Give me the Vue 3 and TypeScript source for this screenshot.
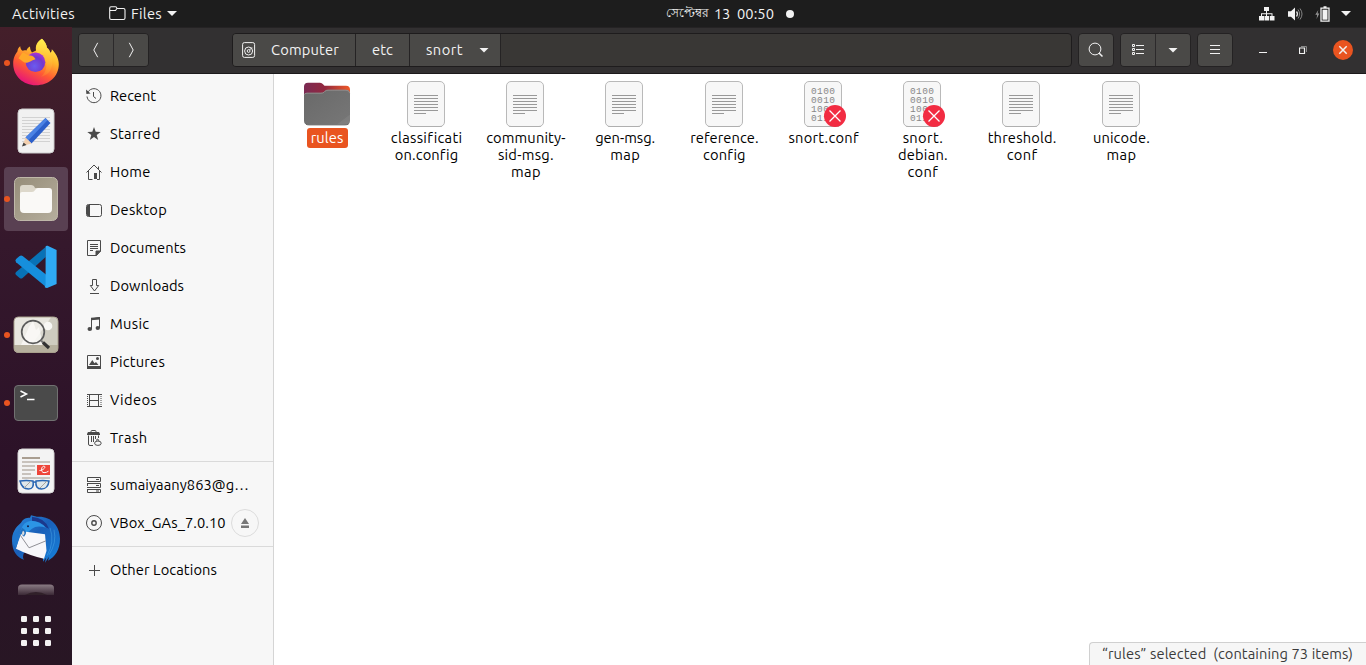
<script setup lang="ts">
interface Place { icon: string; label: string; width: number; eject?: boolean }
interface FileLine { text: string; width: number }
interface FileItem { kind: 'folder' | 'text' | 'binary'; lines: FileLine[] }

const fitText = (el: HTMLElement, binding: { value: number }) => {
  const count = [...(el.textContent ?? '')].length
  el.style.letterSpacing = '0px'
  const natural = el.getBoundingClientRect().width
  el.style.letterSpacing = `${(binding.value - natural) / count}px`
}
const vFit = { mounted: fitText }

const glyphs: Record<string, string> = {
  recent: '<path d="M1.400 5.200A7 7 0 1 1 1 8.500"/><path d="M7.500 4v4.500l2.500 2"/><path d="M0 1.500l.4 4.500 4.200-.6z" fill="#4a4a4a" stroke="none"/>',
  starred: '<path d="M8 1l1.700 4.800 5 .1-4 3.100 1.500 4.900L8 11l-4.200 2.900L5.300 9l-4-3.100 5-.1z" fill="#4a4a4a" stroke="none"/>',
  home: '<path d="M.5 8.500L8 1l7.500 7.500M2.500 7v8.500h4M13.500 7v8.500H11M12.500 2.500v3"/><path d="M8 9h3v6H8z" fill="#4a4a4a" stroke="none"/>',
  desktop: '<rect x=".5" y="2.500" width="15" height="12" rx="2"/><path d="M1 4q0-1 1-1h2v11H2q-1 0-1-1z" fill="#4a4a4a" stroke="none"/>',
  documents: '<path d="M1.500.5h13v10.500l-4 4.500h-9z"/><path d="M4 4.500h8M4 6.500h8M4 8.500h8M4 10.500h3"/><path d="M10 15.500V11h4.500z" fill="#4a4a4a"/>',
  downloads: '<path d="M6.500 1.500h4v6h2.200L8.500 13 4.300 7.500h2.200zM4 15.500h9"/>',
  music: '<path d="M5.500 13V3l8-1.500V12" /><path d="M5 1.800L14 1v2.400L5 4.200z" fill="#4a4a4a" stroke="none"/><ellipse cx="3.800" cy="13" rx="2.300" ry="1.900" fill="#4a4a4a" stroke="none"/><ellipse cx="11.800" cy="12" rx="2.200" ry="1.900" fill="#4a4a4a" stroke="none"/>',
  pictures: '<path d="M1.500 1.500h13v13h-13z"/><path d="M1 12h14v3H1zM3 11l3.300-5 2.200 3.200L10 8l2.500 3z" fill="#4a4a4a" stroke="none"/><circle cx="11.500" cy="4.500" r="1.500" fill="#4a4a4a" stroke="none"/>',
  videos: '<path d="M3.500 2v13M12.500 2v13M1 2.500h15M1 14.500h15M4 8.500h8"/><path d="M1.500 2v13M15 2v13" stroke-dasharray="1 1"/>',
  trash: '<path d="M5 2.500v-1q0-1 1-1h3q1 0 1 1v1"/><path d="M2 2h11l1 2v1H1V4z" fill="#4a4a4a" stroke="none"/><path d="M2.500 5.500v8.500q0 1.500 1.500 1.500h3M12.500 5.500V8M5.500 6v6M7.500 6v6M9.500 6v3"/><ellipse cx="11.900" cy="13.200" rx="3.300" ry="2.200"/><path d="M10.800 10.800q-.8-1.500 1-1.800l1 1.800"/>',
  server: '<path d="M1.500 4V.5h13v4H1M1.500 9V6.500M1 6.500h13.500v4H1M1 12.500h13.500v3h-13v-3"/><path d="M10 2.500h3M10 8.500h3M10 14h3"/>',
  disc: '<circle cx="8" cy="8" r="7.500"/><circle cx="8" cy="8" r="2.200" stroke-width="1.400"/>',
  plus: '<path d="M8.500 3v11M3 8.500h11"/>',
}

const groups: Place[][] = [
  [
    { icon: 'recent', label: 'Recent', width: 46 },
    { icon: 'starred', label: 'Starred', width: 50.5 },
    { icon: 'home', label: 'Home', width: 40.5 },
    { icon: 'desktop', label: 'Desktop', width: 57 },
    { icon: 'documents', label: 'Documents', width: 76 },
    { icon: 'downloads', label: 'Downloads', width: 74 },
    { icon: 'music', label: 'Music', width: 39.5 },
    { icon: 'pictures', label: 'Pictures', width: 55 },
    { icon: 'videos', label: 'Videos', width: 47 },
    { icon: 'trash', label: 'Trash', width: 37.5 },
  ],
  [
    { icon: 'server', label: 'sumaiyaany863@g…', width: 139 },
    { icon: 'disc', label: 'VBox_GAs_7.0.10', width: 115.5, eject: true },
  ],
  [{ icon: 'plus', label: 'Other Locations', width: 107 }],
]

const files: FileItem[] = [
  { kind: 'folder', lines: [{ text: 'rules', width: 33 }] },
  { kind: 'text', lines: [{ text: 'classificati', width: 71 }, { text: 'on.config', width: 63 }] },
  { kind: 'text', lines: [{ text: 'community-', width: 79.5 }, { text: 'sid-msg.', width: 56 }, { text: 'map', width: 30 }] },
  { kind: 'text', lines: [{ text: 'gen-msg.', width: 60 }, { text: 'map', width: 30 }] },
  { kind: 'text', lines: [{ text: 'reference.', width: 68.5 }, { text: 'config', width: 42 }] },
  { kind: 'binary', lines: [{ text: 'snort.conf', width: 70.5 }] },
  { kind: 'binary', lines: [{ text: 'snort.', width: 40.5 }, { text: 'debian.', width: 50 }, { text: 'conf', width: 31 }] },
  { kind: 'text', lines: [{ text: 'threshold.', width: 69 }, { text: 'conf', width: 31 }] },
  { kind: 'text', lines: [{ text: 'unicode.', width: 57 }, { text: 'map', width: 30 }] },
]
const bits = ['0100', '0010', '1001', '0110']
const dotCells = [0, 12, 24]
</script>

<template>
  <div class="screen">
    <header class="topbar">
      <span v-fit="63" class="t activities">Activities</span>
      <div class="appmenu">
        <svg width="17" height="15" viewBox="0 0 17 15" fill="none" stroke="#f2f2f2" stroke-width="1.100">
          <path d="M.7 12V2.200Q.7.8 2 .8h4.500Q7.700.8 7.900 2.500H14.500q1.500 0 1.500 1.500v8q0 1.500-1.500 1.500H2.200Q.7 13.500.7 12zM1 4.500h5.500l1.400-2" />
        </svg>
        <span v-fit="31" class="t">Files</span>
        <i class="caret"></i>
      </div>
      <div class="clock">
        <span class="t bn">সেপ্টেম্বর</span>
        <span v-fit="16" class="t">13</span>
        <span v-fit="37" class="t">00:50</span>
        <i class="dot"></i>
      </div>
      <div class="tray">
        <svg width="16" height="14" viewBox="0 0 16 14" fill="#f2f2f2">
          <path d="M5 0h5v4H5zM0 9h5v4.500H0zM5.500 9h4.500v4.500H5.500zM10.800 9h4.700v4.500h-4.700zM7 4h1v5H7zM2 6.200h11.500V9h-1V7.200H3V9H2z" />
        </svg>
        <svg width="15" height="14" viewBox="0 0 15 14" fill="none">
          <path d="M0 4.300h3L7 .5v13l-4-3.800H0z" fill="#f2f2f2" />
          <path d="M8.500 4.500q2 2.500 0 5" stroke="#ddd" stroke-width="1.300" />
          <path d="M10 2.500q3.200 4.500 0 9M12 1.500q4 5.500 0 11" stroke="#858585" />
        </svg>
        <svg width="15" height="16" viewBox="0 0 15 16" fill="none">
          <path d="M3.300 4L.3 8.800h1.900L1.500 13 4.300 7.600H2.500z" fill="#999" />
          <path d="M6 2.200h8v13H6zM8.500.8h3" stroke="#f2f2f2" stroke-width="1.300" />
          <path d="M7.500 3.700h5v10h-5z" fill="#f2f2f2" />
        </svg>
        <i class="caret"></i>
      </div>
    </header>

    <div class="workspace">
      <aside class="dock">
        <div class="apps">
          <div class="tile running">
            <svg viewBox="0 0 64 64">
              <defs>
                <linearGradient id="fxBody" x1=".8" y1=".05" x2=".3" y2="1">
                  <stop offset="0" stop-color="#fff44f" /><stop offset=".35" stop-color="#ffb52c" />
                  <stop offset=".65" stop-color="#ff5b33" /><stop offset="1" stop-color="#e5107e" />
                </linearGradient>
                <radialGradient id="fxGlobe" cx=".45" cy=".7" r=".75">
                  <stop offset="0" stop-color="#6a5cf0" /><stop offset=".6" stop-color="#7238cd" /><stop offset="1" stop-color="#b833d8" />
                </radialGradient>
                <linearGradient id="fxTail" x1="0" y1="0" x2="0" y2="1">
                  <stop offset="0" stop-color="#fff04d" /><stop offset="1" stop-color="#ff9a2e" stop-opacity=".3" />
                </linearGradient>
              </defs>
              <g transform="translate(-.5 -.3)">
                <path d="M38.500 8c3 3 4.500 5.500 5 9 2 1 3 3 3.300 5 1.500-1 1.500-2.500 1.500-3.500 4 4 7 9 7 15C55.300 46 45 54.500 32.500 54.500 19.500 54.500 9.700 45 9.700 33c0-6 2-9.500 4.300-12.500 0-2 1-4 2.700-5 .2 2 1 3.500 2.300 4.500 1.500-.7 2.500-.7 4-.3.500-1.700 1.700-3 3.500-4 0 2 .5 4.200 2 6l4-2c-.8-5 1.200-9 6-11.700z" fill="url(#fxBody)" />
                <path d="M38.500 8c3 3 4.500 6 5 9 5 6 7 14 4 21-2 5-6 7-10 8 6-5 7-13 3-19-4-4-8-4-8-9 0-4 2-7 6-10z" fill="url(#fxTail)" />
                <circle cx="32" cy="31.500" r="9.800" fill="url(#fxGlobe)" />
                <path d="M15 27.500c4 3 6 5 8.500 4.500 2-.5 4-2 8.500-3.500-1-2.200-3-3.500-5.500-3.700-3-.5-5-2.500-7.500-3z" fill="#ffa829" />
              </g>
            </svg>
          </div>
          <div class="tile">
            <svg viewBox="0 0 64 64">
              <rect x="14" y="10" width="36" height="44" rx="4" fill="#f1f1f1" stroke="#ccc" />
              <path d="M18 18.500h28M18 21.500h28M18 24.500h28M18 27.500h28M18 30.500h28M18 33.500h28M18 36.500h28M18 39.500h28M18 42.500h28" stroke="#d2d2d2" />
              <path d="M41.500 19l5 5-19 20.500-6-6z" fill="#2c5fc9" /><path d="M41.500 19l2 2.200-19 20-3-2.700z" fill="#4b82e4" />
              <path d="M21.500 38.500l6 6L18.500 47z" fill="#f2cfae" /><path d="M19.500 43.500L18 47.500l4.500-1.500z" fill="#444" />
            </svg>
          </div>
          <div class="tile running active">
            <svg viewBox="0 0 64 64">
              <defs><linearGradient id="cabinet" x1="0" y1="0" x2="1" y2="1"><stop offset="0" stop-color="#968d79" /><stop offset="1" stop-color="#b5ae9d" /></linearGradient></defs>
              <rect x="10.500" y="10.500" width="43" height="43" rx="5" fill="url(#cabinet)" stroke="#bfb8a9" />
              <path d="M16 21q0-3 3-3h8q3 0 4 3h14v12H16z" fill="#ddd8cb" />
              <path d="M16 27q0-2 2-2h10q2 0 3.500-2.500Q32.500 21 34 21h11q3 0 3 3v18q0 4-4 4H20q-4 0-4-4z" fill="#faf9f7" />
            </svg>
          </div>
          <div class="tile">
            <svg viewBox="0 0 64 64">
              <g transform="translate(-.4 0)">
                <path d="M42 12v10L19 43q-1.500 1-3 0l-3.500-3q-1.500-1.700 0-3z" fill="#0872b6" />
                <path d="M12.500 24l3.500-3q1.500-1 3 0L43 40v12.500L12.500 27.300q-1.500-1.700 0-3.300z" fill="#168fdc" />
                <path d="M42 11.500q.5-1 2-.7L53 15v34l-9.500 4q-1.500 0-2.500-1l1-2z" fill="#2faaf4" />
              </g>
            </svg>
          </div>
          <div class="tile running">
            <svg viewBox="0 0 64 64">
              <defs><clipPath id="photoClip"><rect x="10" y="14" width="44" height="35.500" rx="4" /></clipPath></defs>
              <g clip-path="url(#photoClip)">
                <path d="M9 13h46v37H9z" fill="#e8e6df" /><path d="M48 13h7v30H27z" fill="#cfccc0" />
                <path d="M9 42h46v8H9z" fill="#b6b09e" /><circle cx="44" cy="23" r="4.300" fill="#f8f7f4" />
                <path d="M17 42l8-18 4-6 3 9 3-3 4 18z" fill="#faf9f6" opacity=".8" />
              </g>
              <rect x="10" y="14" width="44" height="35.500" rx="4.500" fill="none" stroke="#a9a18d" />
              <circle cx="29" cy="29" r="11.300" fill="#fff" fill-opacity=".25" stroke="#5a5a5a" stroke-width="1.700" />
              <path d="M37 37.500l3 3" stroke="#777" stroke-width="2" /><path d="M39 39.500l6 5.500" stroke="#333" stroke-width="3.200" />
            </svg>
          </div>
          <div class="tile running">
            <svg viewBox="0 0 64 64">
              <rect x="10.500" y="14.500" width="43" height="35" rx="3.500" fill="#4a4a4a" stroke="#717171" />
              <path d="M16.500 20l6 3-6 3M23 28.500h7.500" fill="none" stroke="#fff" stroke-width="1.500" />
            </svg>
          </div>
          <div class="tile">
            <svg viewBox="0 0 64 64">
              <rect x="14" y="10" width="36" height="44" rx="4" fill="#f3f3f3" stroke="#d5d5d5" />
              <path d="M18 19h18" stroke="#9c8f80" stroke-width="1.700" />
              <path d="M18 23h28M18 27h13M18 31h13M18 35h9M18 39h28" stroke="#bbb3aa" stroke-width="1.600" />
              <path d="M33 26h13v10H33z" fill="#ee4438" /><path d="M35.500 31.500c4 0 7-4 4.500-4.300s-4 6 0 6.500q2.500 0 4.500-1.500" fill="none" stroke="#fff" stroke-width="1" />
              <g fill="#dfe7ea" stroke="#2865b2" stroke-width="1.500">
                <path d="M16 42q6-1 13 0 1.500 8-4.500 8-6.500 0-8.500-8zM32 42q7-1 13 0-1 8-7.500 8-6.500 0-5.500-8zM29 43.500q1.500-1 3 0" />
              </g>
              <path d="M20 49l7-7M36 49l7-7" stroke="#a9a49c" stroke-width="1" />
            </svg>
          </div>
          <div class="tile">
            <svg viewBox="0 0 64 64">
              <defs><linearGradient id="bird" x1="0" y1="0" x2="1" y2="1"><stop offset="0" stop-color="#298ce0" /><stop offset=".45" stop-color="#1a5fb8" /><stop offset="1" stop-color="#1682dc" /></linearGradient></defs>
              <g transform="translate(0 .8)">
                <path d="M26 10l1-2.500 6 1.500c14-1 23 9 23 22 0 11-5 18-12 22l1-4-4 6 1-5-3 4v-6L20 45q-2 5 0 7C13 50 8 43 8 33c0-8 3-13 9-18 2-4 5-5 9-5z" fill="url(#bird)" />
                <path d="M28 9q13 1 17 12-9-5-17-4z" fill="#1b398d" />
                <path d="M17 22q2-8 10-9 9 0 15 7-9-3-14 1l-6 5-5 5q-2-5 0-9z" fill="#2c95e5" />
                <path d="M16 27l6-3 19 2.500 1.500 16.500-2.500 8q-14-3-28-10z" fill="#f7f7fa" />
                <path d="M9 26q-2 10 3 14l4-11 2-6z" fill="#1f75cd" />
                <path d="M16 27l9 13 17-7" fill="none" stroke="#909096" />
                <path d="M18 20q7 4 2 9-5-3-2-9z" fill="#2270bd" /><path d="M19 23q3 2 0 5-2-2 0-5z" fill="#ddd" /><circle cx="24" cy="18.500" r="1" fill="#101c48" />
                <path d="M46 20q5 14-3 28M50 22q3 13-5 25" fill="none" stroke="#55b5ef" stroke-opacity=".4" />
              </g>
            </svg>
          </div>
          <div class="tile">
            <svg viewBox="0 0 64 64">
              <defs><linearGradient id="peek" x1="0" y1="0" x2="0" y2="1"><stop offset="0" stop-color="#8b7c84" /><stop offset="1" stop-color="#3b2936" /></linearGradient></defs>
              <path d="M14 20v-7q0-3.500 4-3.500h28q4 0 4 3.500v7z" fill="url(#peek)" /><path d="M21 20q11-6 22 0z" fill="#302029" />
            </svg>
          </div>
        </div>
        <svg class="launcher" width="32" height="32" viewBox="0 0 32 32" fill="#f3f1f2">
          <template v-for="y in dotCells" :key="y">
            <rect v-for="x in dotCells" :key="x" :x="x + 1" :y="y + 1" width="6" height="6" rx="1.200" />
          </template>
        </svg>
      </aside>

      <main class="window">
        <div class="headerbar">
          <div class="group nav">
            <button class="btn"><svg width="16" height="16" viewBox="0 0 16 16"><path d="M9.700.8L5.800 8l3.900 7.200" /></svg></button>
            <button class="btn"><svg width="16" height="16" viewBox="0 0 16 16"><path d="M6.300.8L10.200 8l-3.900 7.200" /></svg></button>
          </div>
          <div class="pathbar">
            <div class="crumb computer">
              <svg width="14" height="16" viewBox="0 0 14 16"><rect x=".6" y=".6" width="12" height="14.800" rx="1.800" /><circle cx="6.600" cy="9" r="4" /><circle cx="6.600" cy="9" r="1.400" /><path d="M7.500 8l2.500-2.500" /></svg>
              <span v-fit="68" class="t">Computer</span>
            </div>
            <div class="crumb etc"><span v-fit="21" class="t">etc</span></div>
            <div class="crumb snort"><span v-fit="37" class="t">snort</span><i class="caret"></i></div>
          </div>
          <button class="btn single search"><svg width="16" height="16" viewBox="0 0 16 16"><circle cx="7" cy="7" r="5.900" /><path d="M11 11l3.500 3.500" stroke-width="1.500" /></svg></button>
          <div class="group view">
            <button class="btn"><svg width="16" height="16" viewBox="0 0 16 16"><path d="M2.500 2.500h2v2h-2zM2.500 6.500h2v2h-2zM2.500 10.500h2v2h-2zM6 3.500h8M6 7.500h8M6 11.500h8" /></svg></button>
            <button class="btn"><i class="caret"></i></button>
          </div>
          <button class="btn single menu"><svg width="16" height="16" viewBox="0 0 16 16"><path d="M3 3.500h10M3 7.500h10M3 11.500h10" /></svg></button>
          <div class="controls">
            <svg width="8" height="8" viewBox="0 0 8 8"><path d="M0 6.500h8" /></svg>
            <svg width="8" height="8" viewBox="0 0 8 8"><path d="M.5 2h5v5.500h-5z" stroke-width="1.200" /><path d="M2 .5h5.500V6" stroke="#888" /></svg>
            <span class="close"><svg width="20" height="20" viewBox="0 0 20 20"><path d="M6.300 6.300l7.400 7.400M13.700 6.300l-7.400 7.400" stroke-width="1.500" /></svg></span>
          </div>
        </div>

        <div class="content">
          <nav class="sidebar">
            <div v-for="(group, g) in groups" :key="g" class="places">
              <div v-for="place in group" :key="place.label" class="place">
                <svg width="16" height="16" viewBox="0 0 16 16" fill="none" stroke="#4a4a4a" v-html="glyphs[place.icon]"></svg>
                <span v-fit="place.width" class="t">{{ place.label }}</span>
                <span v-if="place.eject" class="eject">
                  <svg width="10" height="10" viewBox="0 0 10 10" fill="#777"><path d="M5 0l4 6H1zM1 7.500h8V10H1z" /></svg>
                </span>
              </div>
            </div>
          </nav>

          <section class="files">
            <div v-for="(file, f) in files" :key="f" class="file" :class="file.kind">
              <svg v-if="file.kind === 'folder'" width="48" height="48" viewBox="0 0 48 48">
                <defs>
                  <linearGradient id="tab"><stop offset="0" stop-color="#7a2a53" /><stop offset=".45" stop-color="#93283f" /><stop offset="1" stop-color="#f05a28" /></linearGradient>
                  <linearGradient id="front" x1="0" y1="0" x2="1" y2="1"><stop offset="0" stop-color="#696969" /><stop offset=".85" stop-color="#757575" /><stop offset=".86" stop-color="#7d7d7d" /><stop offset="1" stop-color="#808080" /></linearGradient>
                </defs>
                <g transform="translate(0 .7)">
                  <path d="M1 20V6q0-4 4-4h12q2 0 3 1.500L21.500 5H43q4 0 4 4v11z" fill="url(#tab)" />
                  <path d="M1 15q0-3 3-3h14q2 0 3-1l1-1q1-1 3-1h18q4 0 4 4v27q0 4-4 4H5q-4 0-4-4z" fill="url(#front)" />
                  <path d="M1.300 14q.2-1.500 2.700-1.500h14q2 0 3-1l1-1q1-1 3-1h18q3.500 0 3.700 3" fill="none" stroke="#a09a9a" stroke-width=".7" />
                  <path d="M3 43.500q1 .7 3 .7h36q2 0 3.500-.8" fill="none" stroke="#505050" stroke-width=".8" />
                </g>
              </svg>
              <svg v-else width="48" height="48" viewBox="0 0 48 48">
                <rect x="5.500" y="1.500" width="37" height="45" rx="4.500" fill="#f7f7f7" stroke="#b9b9b9" />
                <path d="M8 46.500h32" stroke="#aaa" opacity=".6" />
                <path v-if="file.kind === 'text'" d="M12 15.500h24M12 18.500h24M12 21.500h24M12 24.500h24M12 27.500h24M12 30.500h24M12 33.500h12" stroke="#999" />
                <template v-else>
                  <text v-for="(row, r) in bits" :key="r" x="12" :y="14 + r * 9" class="bits">{{ row }}</text>
                  <circle cx="36" cy="36" r="11" fill="#f22c42" />
                  <path d="M30.500 30.500l11 11M41.500 30.500l-11 11" stroke="#fff" stroke-width="1.300" />
                </template>
              </svg>
              <div class="name">
                <span v-for="line in file.lines" :key="line.text" v-fit="line.width" class="t">{{ line.text }}</span>
              </div>
            </div>
            <div class="status"><span v-fit="251" class="t">“rules” selected&nbsp; (containing 73 items)</span></div>
          </section>
        </div>
      </main>
    </div>
  </div>
</template>

<style>
body { margin: 0; overflow: hidden; }
</style>

<style scoped>
* { box-sizing: border-box; }
.screen {
  width: 1366px; height: 665px; display: flex; flex-direction: column; overflow: hidden;
  font-family: Ubuntu, "Noto Sans", "Open Sans", sans-serif; font-size: 14.667px; color: #000;
}
.t { display: inline-block; white-space: pre; flex: none; }
.caret { width: 10px; height: 5px; background: #f2f2f2; clip-path: polygon(0 0, 100% 0, 50% 100%); flex: none; }

.topbar { height: 27px; flex: none; background: #1d1d1d; color: #f2f2f2; display: flex; align-items: center; }
.activities { margin-left: 12px; }
.appmenu { display: flex; align-items: center; margin-left: 34px; }
.appmenu .t { margin-left: 5px; }
.appmenu .caret { margin-left: 5px; }
.clock { display: flex; align-items: center; margin-left: 489px; }
.clock .t + .t { margin-left: 4px; }
.clock .t + .t + .t { margin-left: 7px; }
.bn { font-size: 12.2px; width: 44px; }
.dot { width: 8px; height: 8px; border-radius: 50%; background: #f2f2f2; margin-left: 12px; }
.tray { margin-left: auto; margin-right: 15px; display: flex; align-items: center; }
.tray svg { margin-right: 13px; }
.tray svg:nth-child(2) { margin-right: 12px; }
.tray svg:nth-child(3) { margin-right: 11px; }

.workspace { flex: 1; display: flex; min-height: 0; }
.dock { width: 72px; background: linear-gradient(#441f2a, #35182c 34%, #2c1228 67%, #281624); display: flex; flex-direction: column; align-items: center; }
.apps { height: 568px; padding-top: 4px; display: flex; flex-direction: column; gap: 4px; overflow: hidden; }
.tile { width: 64px; height: 64px; flex: none; position: relative; border-radius: 4px; }
.tile svg { display: block; width: 64px; height: 64px; }
.active { background: #594052; }
.running::before { content: ""; position: absolute; left: 0; top: 29px; width: 6px; height: 6px; border-radius: 50%; background: #e95420; }
.launcher { margin-top: 20px; }

.window { flex: 1; display: flex; flex-direction: column; min-width: 0; }
.headerbar { height: 47px; flex: none; background: #323031; border-top: 1px solid #252324; border-bottom: 1px solid #1c1a1b; display: flex; align-items: center; padding: 0 13px 1px 6px; }
.headerbar svg { fill: none; stroke: #f2f2f2; stroke-width: 1; display: block; }
.group { display: flex; border: 1px solid #242223; border-radius: 4px; overflow: hidden; height: 34px; flex: none; }
.btn { width: 34px; height: 32px; padding: 0; border: 0; background: #4a4947; display: flex; align-items: center; justify-content: center; }
.group .btn + .btn { width: 35px; border-left: 1px solid #2c2a2b; }
.single { width: 36px; height: 34px; border: 1px solid #242223; border-radius: 4px; flex: none; }
.pathbar { margin-left: 83px; width: 840px; height: 34px; border: 1px solid #1e1c1d; border-radius: 4px; background: #393735; display: flex; overflow: hidden; flex: none; color: #f2f2f2; }
.crumb { background: #4a4947; border-right: 1px solid #252324; display: flex; align-items: center; }
.crumb .t, .place > .t, .status .t { padding-bottom: 2px; }
.computer { width: 123px; padding-left: 9px; gap: 15px; }
.etc { width: 54px; padding-left: 16px; }
.snort { width: 91px; padding-left: 16px; }
.snort .caret { margin-left: 16px; }
.search { margin-left: 6px; }
.view { margin-left: 6px; }
.menu { margin-left: 6px; }
.controls { margin-left: auto; display: flex; align-items: center; gap: 32px; }
.close { width: 20px; height: 20px; border-radius: 50%; background: #e95420; margin-left: -6px; }

.content { flex: 1; display: flex; min-height: 0; }
.sidebar { width: 202px; background: #f7f7f7; border-right: 1px solid #d5d5d5; padding-top: 3px; flex: none; }
.places + .places { border-top: 1px solid #dadada; margin-top: 4px; padding-top: 4px; }
.place { height: 38px; padding-left: 14px; display: flex; align-items: center; }
.place > .t { margin-left: 8px; }
.eject { width: 28px; height: 28px; margin-left: 5.500px; border: 1px solid #dcdcdc; border-radius: 50%; display: flex; align-items: center; justify-content: center; }

.files { flex: 1; background: #fff; display: flex; position: relative; padding: 6px 0 0 3px; align-items: flex-start; }
.file { width: 99.250px; flex: none; display: flex; flex-direction: column; align-items: center; }
.file > svg { display: block; }
.name { display: flex; flex-direction: column; align-items: center; line-height: 17px; margin-top: 1px; padding-left: 1.500px; }
.folder .name { background: #e95420; color: #fff; border-radius: 3px; padding: 1px 4px 2px; margin: 0 0 0 1px; }
.bits { font-family: "Liberation Mono", monospace; font-size: 9.500px; letter-spacing: .4px; fill: #888; }
.status { position: absolute; right: 0; bottom: 0; width: 277px; height: 23px; border: 1px solid #d0d0d0; border-right: 0; border-bottom: 0; border-radius: 4px 0 0; background: #f6f6f6; color: #3b3b3b; padding-left: 12px; display: flex; align-items: center; }
</style>
